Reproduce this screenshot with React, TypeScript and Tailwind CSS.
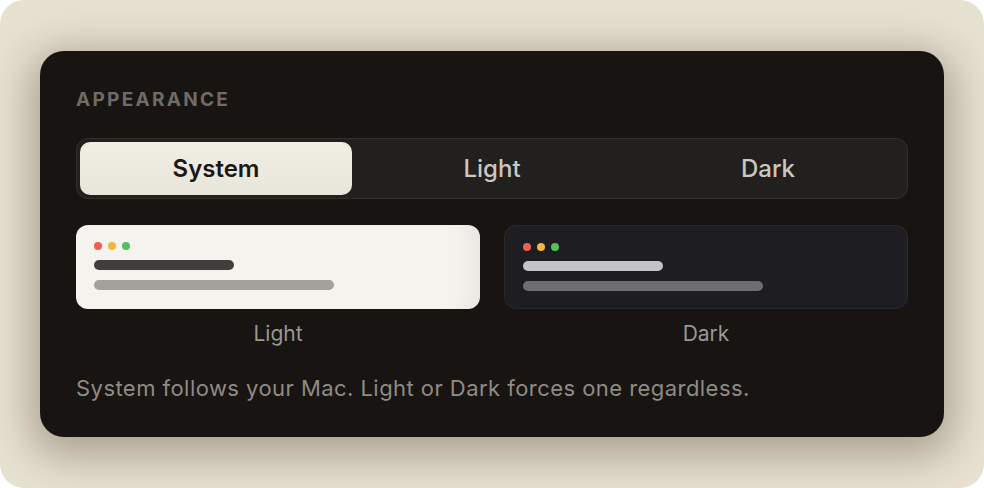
import { useState } from 'react';

type Mode = 'System' | 'Light' | 'Dark';

const modes: Mode[] = ['System', 'Light', 'Dark'];

function Preview({ dark }: { dark?: boolean }) {
  return (
    <div className="flex flex-col items-center">
      <div
        className={`w-full h-[84px] rounded-[12px] px-[18px] pt-[17px] flex flex-col ${
          dark
            ? 'bg-[#1e1d21] border border-[#2a292d]'
            : 'bg-[#f4f3ed] shadow-[inset_-24px_0_24px_-16px_rgba(0,0,0,0.06)]'
        }`}
      >
        <div className="flex gap-[6px]">
          <span className="w-[8px] h-[8px] rounded-full bg-[#ec5f57]" />
          <span className="w-[8px] h-[8px] rounded-full bg-[#f2b73a]" />
          <span className="w-[8px] h-[8px] rounded-full bg-[#52c257]" />
        </div>
        <div className={`mt-[10px] w-[140px] h-[10px] rounded-full ${dark ? 'bg-[#c4c3c7]' : 'bg-[#403f3d]'}`} />
        <div className={`mt-[10px] w-[240px] h-[10px] rounded-full ${dark ? 'bg-[#6e6d72]' : 'bg-[#a2a19c]'}`} />
      </div>
      <span className="mt-[12px] text-[21px] leading-[26px] text-[#9b9791]">{dark ? 'Dark' : 'Light'}</span>
    </div>
  );
}

export default function App() {
  const [mode, setMode] = useState<Mode>('System');

  return (
    <div className="w-[984px] h-[488px] bg-white" style={{ fontFamily: 'Inter, "Noto Sans", sans-serif' }}>
      <div className="w-full h-full rounded-[24px] bg-[#e7e1d2] pt-[51px] pl-[40px]">
        <div className="w-[904px] h-[386px] rounded-[24px] bg-[#171412] px-[36px] pt-[87px] shadow-[0_10px_40px_10px_rgba(60,50,30,0.35)] relative">
          <div className="absolute left-[36px] top-[38px] text-[19px] leading-[22px] font-bold tracking-[0.12em] text-[#6f6b66]">APPEARANCE</div>
          <div className="h-[61px] rounded-[12px] border border-[#33302d] bg-[#22201e] p-[3px] grid grid-cols-3 gap-[4px]">
            {modes.map((m) => (
              <button
                key={m}
                onClick={() => setMode(m)}
                className={`rounded-[10px] text-[24px] ${
                  mode === m
                    ? 'bg-gradient-to-b from-[#f1eee4] to-[#e8e5da] text-[#1a1816] font-semibold'
                    : 'text-[#cbc7c1] font-medium'
                }`}
              >
                {m}
              </button>
            ))}
          </div>
          <div className="mt-[26px] grid grid-cols-2 gap-[24px]">
            <Preview />
            <Preview dark />
          </div>
          <p className="mt-[28px] text-[22px] leading-[26px] tracking-[0.45px] text-[#8f8b85]">
            System follows your Mac. Light or Dark forces one regardless.
          </p>
        </div>
      </div>
    </div>
  );
}
